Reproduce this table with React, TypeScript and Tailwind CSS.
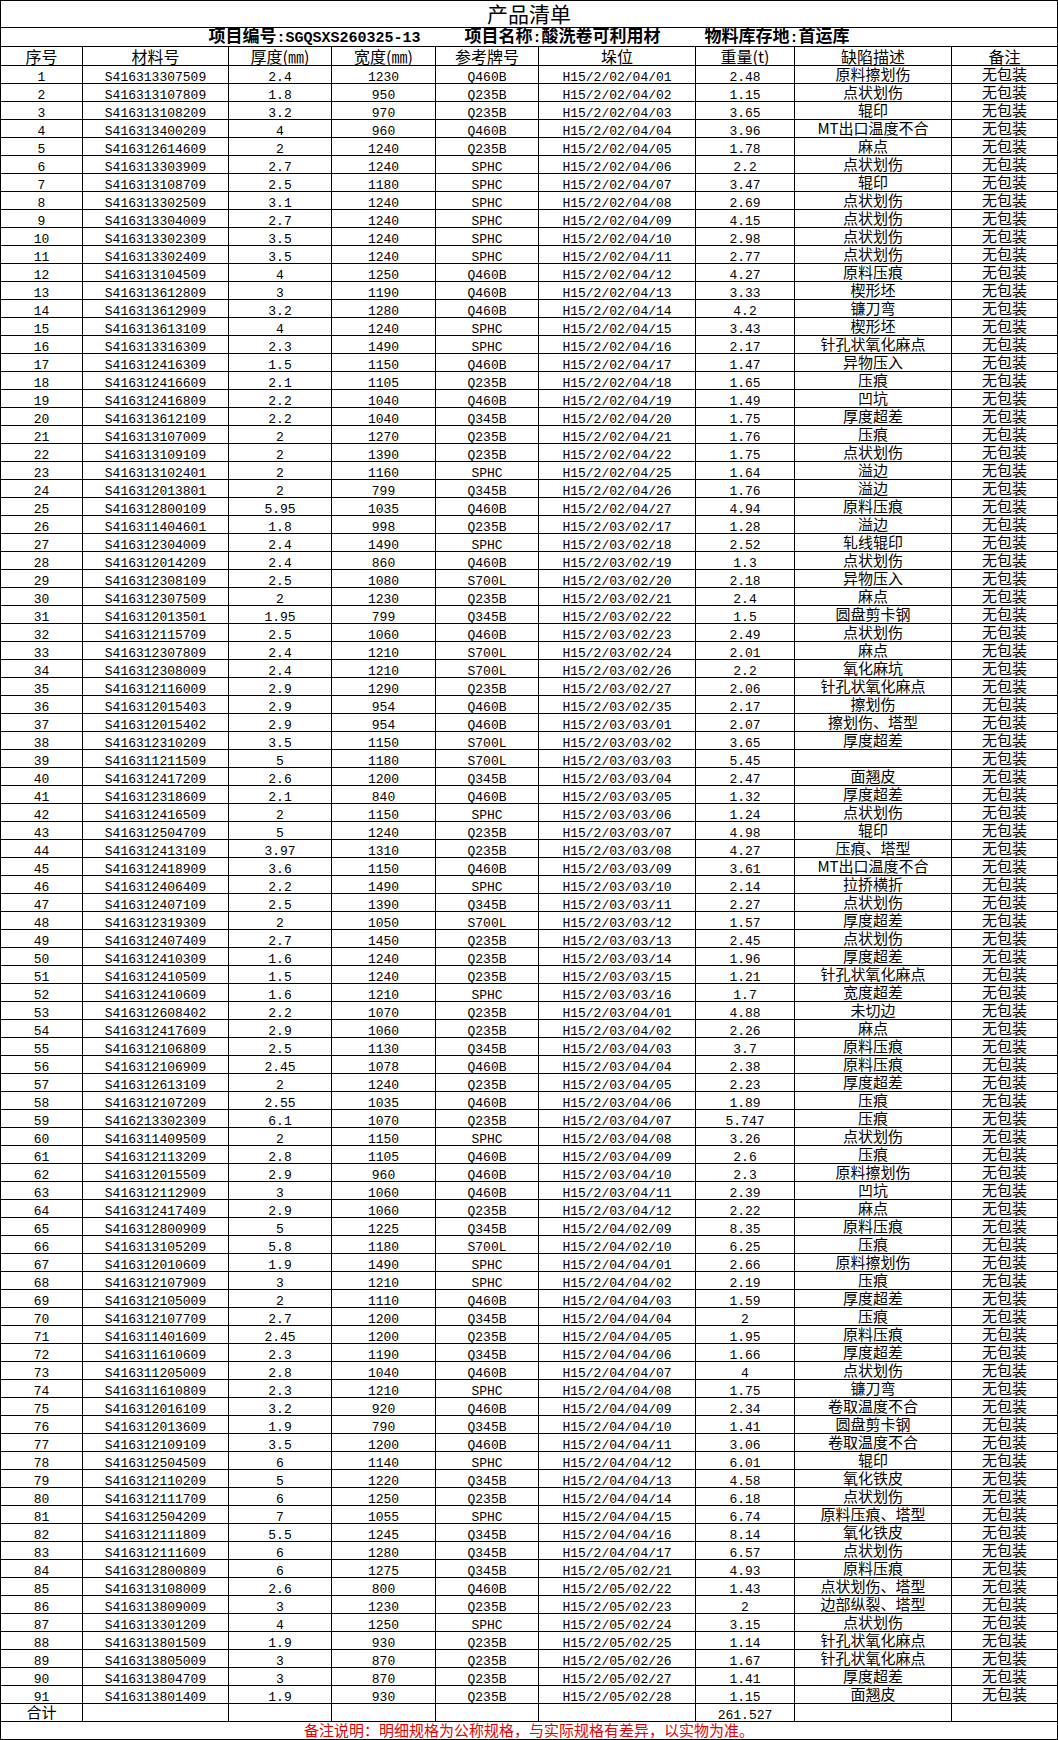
import React from "react"

type Row = [string, string, string, string, string, string, string]

const rows: Row[] = [
  ["S416313307509", "2.4", "1230", "Q460B", "H15/2/02/04/01", "2.48", "原料擦划伤"],
  ["S416313107809", "1.8", "950", "Q235B", "H15/2/02/04/02", "1.15", "点状划伤"],
  ["S416313108209", "3.2", "970", "Q235B", "H15/2/02/04/03", "3.65", "辊印"],
  ["S416313400209", "4", "960", "Q460B", "H15/2/02/04/04", "3.96", "MT出口温度不合"],
  ["S416312614609", "2", "1240", "Q235B", "H15/2/02/04/05", "1.78", "麻点"],
  ["S416313303909", "2.7", "1240", "SPHC", "H15/2/02/04/06", "2.2", "点状划伤"],
  ["S416313108709", "2.5", "1180", "SPHC", "H15/2/02/04/07", "3.47", "辊印"],
  ["S416313302509", "3.1", "1240", "SPHC", "H15/2/02/04/08", "2.69", "点状划伤"],
  ["S416313304009", "2.7", "1240", "SPHC", "H15/2/02/04/09", "4.15", "点状划伤"],
  ["S416313302309", "3.5", "1240", "SPHC", "H15/2/02/04/10", "2.98", "点状划伤"],
  ["S416313302409", "3.5", "1240", "SPHC", "H15/2/02/04/11", "2.77", "点状划伤"],
  ["S416313104509", "4", "1250", "Q460B", "H15/2/02/04/12", "4.27", "原料压痕"],
  ["S416313612809", "3", "1190", "Q460B", "H15/2/02/04/13", "3.33", "楔形坯"],
  ["S416313612909", "3.2", "1280", "Q460B", "H15/2/02/04/14", "4.2", "镰刀弯"],
  ["S416313613109", "4", "1240", "SPHC", "H15/2/02/04/15", "3.43", "楔形坯"],
  ["S416313316309", "2.3", "1490", "SPHC", "H15/2/02/04/16", "2.17", "针孔状氧化麻点"],
  ["S416312416309", "1.5", "1150", "Q460B", "H15/2/02/04/17", "1.47", "异物压入"],
  ["S416312416609", "2.1", "1105", "Q235B", "H15/2/02/04/18", "1.65", "压痕"],
  ["S416312416809", "2.2", "1040", "Q460B", "H15/2/02/04/19", "1.49", "凹坑"],
  ["S416313612109", "2.2", "1040", "Q345B", "H15/2/02/04/20", "1.75", "厚度超差"],
  ["S416313107009", "2", "1270", "Q235B", "H15/2/02/04/21", "1.76", "压痕"],
  ["S416313109109", "2", "1390", "Q235B", "H15/2/02/04/22", "1.75", "点状划伤"],
  ["S416313102401", "2", "1160", "SPHC", "H15/2/02/04/25", "1.64", "溢边"],
  ["S416312013801", "2", "799", "Q345B", "H15/2/02/04/26", "1.76", "溢边"],
  ["S416312800109", "5.95", "1035", "Q460B", "H15/2/02/04/27", "4.94", "原料压痕"],
  ["S416311404601", "1.8", "998", "Q235B", "H15/2/03/02/17", "1.28", "溢边"],
  ["S416312304009", "2.4", "1490", "SPHC", "H15/2/03/02/18", "2.52", "轧线辊印"],
  ["S416312014209", "2.4", "860", "Q460B", "H15/2/03/02/19", "1.3", "点状划伤"],
  ["S416312308109", "2.5", "1080", "S700L", "H15/2/03/02/20", "2.18", "异物压入"],
  ["S416312307509", "2", "1230", "Q235B", "H15/2/03/02/21", "2.4", "麻点"],
  ["S416312013501", "1.95", "799", "Q345B", "H15/2/03/02/22", "1.5", "圆盘剪卡钢"],
  ["S416312115709", "2.5", "1060", "Q460B", "H15/2/03/02/23", "2.49", "点状划伤"],
  ["S416312307809", "2.4", "1210", "S700L", "H15/2/03/02/24", "2.01", "麻点"],
  ["S416312308009", "2.4", "1210", "S700L", "H15/2/03/02/26", "2.2", "氧化麻坑"],
  ["S416312116009", "2.9", "1290", "Q235B", "H15/2/03/02/27", "2.06", "针孔状氧化麻点"],
  ["S416312015403", "2.9", "954", "Q460B", "H15/2/03/02/35", "2.17", "擦划伤"],
  ["S416312015402", "2.9", "954", "Q460B", "H15/2/03/03/01", "2.07", "擦划伤、塔型"],
  ["S416312310209", "3.5", "1150", "S700L", "H15/2/03/03/02", "3.65", "厚度超差"],
  ["S416311211509", "5", "1180", "S700L", "H15/2/03/03/03", "5.45", ""],
  ["S416312417209", "2.6", "1200", "Q345B", "H15/2/03/03/04", "2.47", "面翘皮"],
  ["S416312318609", "2.1", "840", "Q460B", "H15/2/03/03/05", "1.32", "厚度超差"],
  ["S416312416509", "2", "1150", "SPHC", "H15/2/03/03/06", "1.24", "点状划伤"],
  ["S416312504709", "5", "1240", "Q235B", "H15/2/03/03/07", "4.98", "辊印"],
  ["S416312413109", "3.97", "1310", "Q235B", "H15/2/03/03/08", "4.27", "压痕、塔型"],
  ["S416312418909", "3.6", "1150", "Q460B", "H15/2/03/03/09", "3.61", "MT出口温度不合"],
  ["S416312406409", "2.2", "1490", "SPHC", "H15/2/03/03/10", "2.14", "拉挢横折"],
  ["S416312407109", "2.5", "1390", "Q345B", "H15/2/03/03/11", "2.27", "点状划伤"],
  ["S416312319309", "2", "1050", "S700L", "H15/2/03/03/12", "1.57", "厚度超差"],
  ["S416312407409", "2.7", "1450", "Q235B", "H15/2/03/03/13", "2.45", "点状划伤"],
  ["S416312410309", "1.6", "1240", "Q235B", "H15/2/03/03/14", "1.96", "厚度超差"],
  ["S416312410509", "1.5", "1240", "Q235B", "H15/2/03/03/15", "1.21", "针孔状氧化麻点"],
  ["S416312410609", "1.6", "1210", "SPHC", "H15/2/03/03/16", "1.7", "宽度超差"],
  ["S416312608402", "2.2", "1070", "Q235B", "H15/2/03/04/01", "4.88", "未切边"],
  ["S416312417609", "2.9", "1060", "Q235B", "H15/2/03/04/02", "2.26", "麻点"],
  ["S416312106809", "2.5", "1130", "Q345B", "H15/2/03/04/03", "3.7", "原料压痕"],
  ["S416312106909", "2.45", "1078", "Q460B", "H15/2/03/04/04", "2.38", "原料压痕"],
  ["S416312613109", "2", "1240", "Q235B", "H15/2/03/04/05", "2.23", "厚度超差"],
  ["S416312107209", "2.55", "1035", "Q460B", "H15/2/03/04/06", "1.89", "压痕"],
  ["S416213302309", "6.1", "1070", "Q235B", "H15/2/03/04/07", "5.747", "压痕"],
  ["S416311409509", "2", "1150", "SPHC", "H15/2/03/04/08", "3.26", "点状划伤"],
  ["S416312113209", "2.8", "1105", "Q460B", "H15/2/03/04/09", "2.6", "压痕"],
  ["S416312015509", "2.9", "960", "Q460B", "H15/2/03/04/10", "2.3", "原料擦划伤"],
  ["S416312112909", "3", "1060", "Q460B", "H15/2/03/04/11", "2.39", "凹坑"],
  ["S416312417409", "2.9", "1060", "Q235B", "H15/2/03/04/12", "2.22", "麻点"],
  ["S416312800909", "5", "1225", "Q345B", "H15/2/04/02/09", "8.35", "原料压痕"],
  ["S416313105209", "5.8", "1180", "S700L", "H15/2/04/02/10", "6.25", "压痕"],
  ["S416312010609", "1.9", "1490", "SPHC", "H15/2/04/04/01", "2.66", "原料擦划伤"],
  ["S416312107909", "3", "1210", "SPHC", "H15/2/04/04/02", "2.19", "压痕"],
  ["S416312105009", "2", "1110", "Q460B", "H15/2/04/04/03", "1.59", "厚度超差"],
  ["S416312107709", "2.7", "1200", "Q345B", "H15/2/04/04/04", "2", "压痕"],
  ["S416311401609", "2.45", "1200", "Q235B", "H15/2/04/04/05", "1.95", "原料压痕"],
  ["S416311610609", "2.3", "1190", "Q345B", "H15/2/04/04/06", "1.66", "厚度超差"],
  ["S416311205009", "2.8", "1040", "Q460B", "H15/2/04/04/07", "4", "点状划伤"],
  ["S416311610809", "2.3", "1210", "SPHC", "H15/2/04/04/08", "1.75", "镰刀弯"],
  ["S416312016109", "3.2", "920", "Q460B", "H15/2/04/04/09", "2.34", "卷取温度不合"],
  ["S416312013609", "1.9", "790", "Q345B", "H15/2/04/04/10", "1.41", "圆盘剪卡钢"],
  ["S416312109109", "3.5", "1200", "Q460B", "H15/2/04/04/11", "3.06", "卷取温度不合"],
  ["S416312504509", "6", "1140", "SPHC", "H15/2/04/04/12", "6.01", "辊印"],
  ["S416312110209", "5", "1220", "Q345B", "H15/2/04/04/13", "4.58", "氧化铁皮"],
  ["S416312111709", "6", "1250", "Q235B", "H15/2/04/04/14", "6.18", "点状划伤"],
  ["S416312504209", "7", "1055", "SPHC", "H15/2/04/04/15", "6.74", "原料压痕、塔型"],
  ["S416312111809", "5.5", "1245", "Q345B", "H15/2/04/04/16", "8.14", "氧化铁皮"],
  ["S416312111609", "6", "1280", "Q345B", "H15/2/04/04/17", "6.57", "点状划伤"],
  ["S416312800809", "6", "1275", "Q345B", "H15/2/05/02/21", "4.93", "原料压痕"],
  ["S416313108009", "2.6", "800", "Q460B", "H15/2/05/02/22", "1.43", "点状划伤、塔型"],
  ["S416313809009", "3", "1230", "Q235B", "H15/2/05/02/23", "2", "边部纵裂、塔型"],
  ["S416313301209", "4", "1250", "SPHC", "H15/2/05/02/24", "3.15", "点状划伤"],
  ["S416313801509", "1.9", "930", "Q235B", "H15/2/05/02/25", "1.14", "针孔状氧化麻点"],
  ["S416313805009", "3", "870", "Q235B", "H15/2/05/02/26", "1.67", "针孔状氧化麻点"],
  ["S416313804709", "3", "870", "Q235B", "H15/2/05/02/27", "1.41", "厚度超差"],
  ["S416313801409", "1.9", "930", "Q235B", "H15/2/05/02/28", "1.15", "面翘皮"],
]

const headers = ["序号", "材料号", "厚度(㎜)", "宽度(㎜)", "参考牌号", "垛位", "重量(t)", "缺陷描述", "备注"]

const mono = "font-['Liberation_Mono','Noto_Sans_CJK_SC',monospace]"
const cjk = "font-['Noto_Sans_CJK_SC',sans-serif]"
const cell = "border-r border-b border-black flex items-center justify-center whitespace-nowrap"
const num = `h-[18px] ${cell} ${mono} text-[13px] leading-[13px] pt-[6px]`
const txt = `h-[18px] ${cell} ${cjk} text-[15px] leading-[15px] pb-[2px]`

export default function App() {
  return (
    <div className="w-[1058px] bg-white text-black">
      <div className="grid grid-cols-[82px_146px_103px_104px_103px_157px_99px_157px_106px] border-l border-t border-black">
        {/* title */}
        <div className={`col-span-9 h-[27px] ${cell} ${cjk} text-[21px] leading-[21px] pb-[2px]`}>产品清单</div>

        {/* project info */}
        <div className={`col-span-9 h-[19px] ${cell} gap-[44px] font-bold text-[17px] leading-[16px] pb-[1px] ${cjk}`}>
          <span>
            项目编号<span className={`${mono} text-[15px]`}>:SGQSXS260325-13</span>
          </span>
          <span>
            项目名称<span className={`${mono} text-[15px]`}>:</span>酸洗卷可利用材
          </span>
          <span>
            物料库存地<span className={`${mono} text-[15px]`}>:</span>首运库
          </span>
        </div>

        {/* header */}
        {headers.map((h) => (
          <div key={h} className={`h-[19px] ${cell} ${cjk} text-[16px] leading-[16px] pb-[1px]`}>
            {h}
          </div>
        ))}

        {/* data rows */}
        {rows.map((r, i) => (
          <React.Fragment key={i}>
            <div className={num}>{i + 1}</div>
            {r.slice(0, 6).map((v, j) => (
              <div key={j} className={num}>
                {v}
              </div>
            ))}
            <div className={txt}>{r[6]}</div>
            <div className={txt}>无包装</div>
          </React.Fragment>
        ))}

        {/* total */}
        <div className={txt}>合计</div>
        <div className={`h-[18px] ${cell}`} />
        <div className={`h-[18px] ${cell}`} />
        <div className={`h-[18px] ${cell}`} />
        <div className={`h-[18px] ${cell}`} />
        <div className={`h-[18px] ${cell}`} />
        <div className={num}>261.527</div>
        <div className={`h-[18px] ${cell}`} />
        <div className={`h-[18px] ${cell}`} />

        {/* note */}
        <div className={`col-span-9 ${txt} text-[#e60000]`}>
          备注说明：明细规格为公称规格，与实际规格有差异，以实物为准。
        </div>
      </div>
    </div>
  )
}
